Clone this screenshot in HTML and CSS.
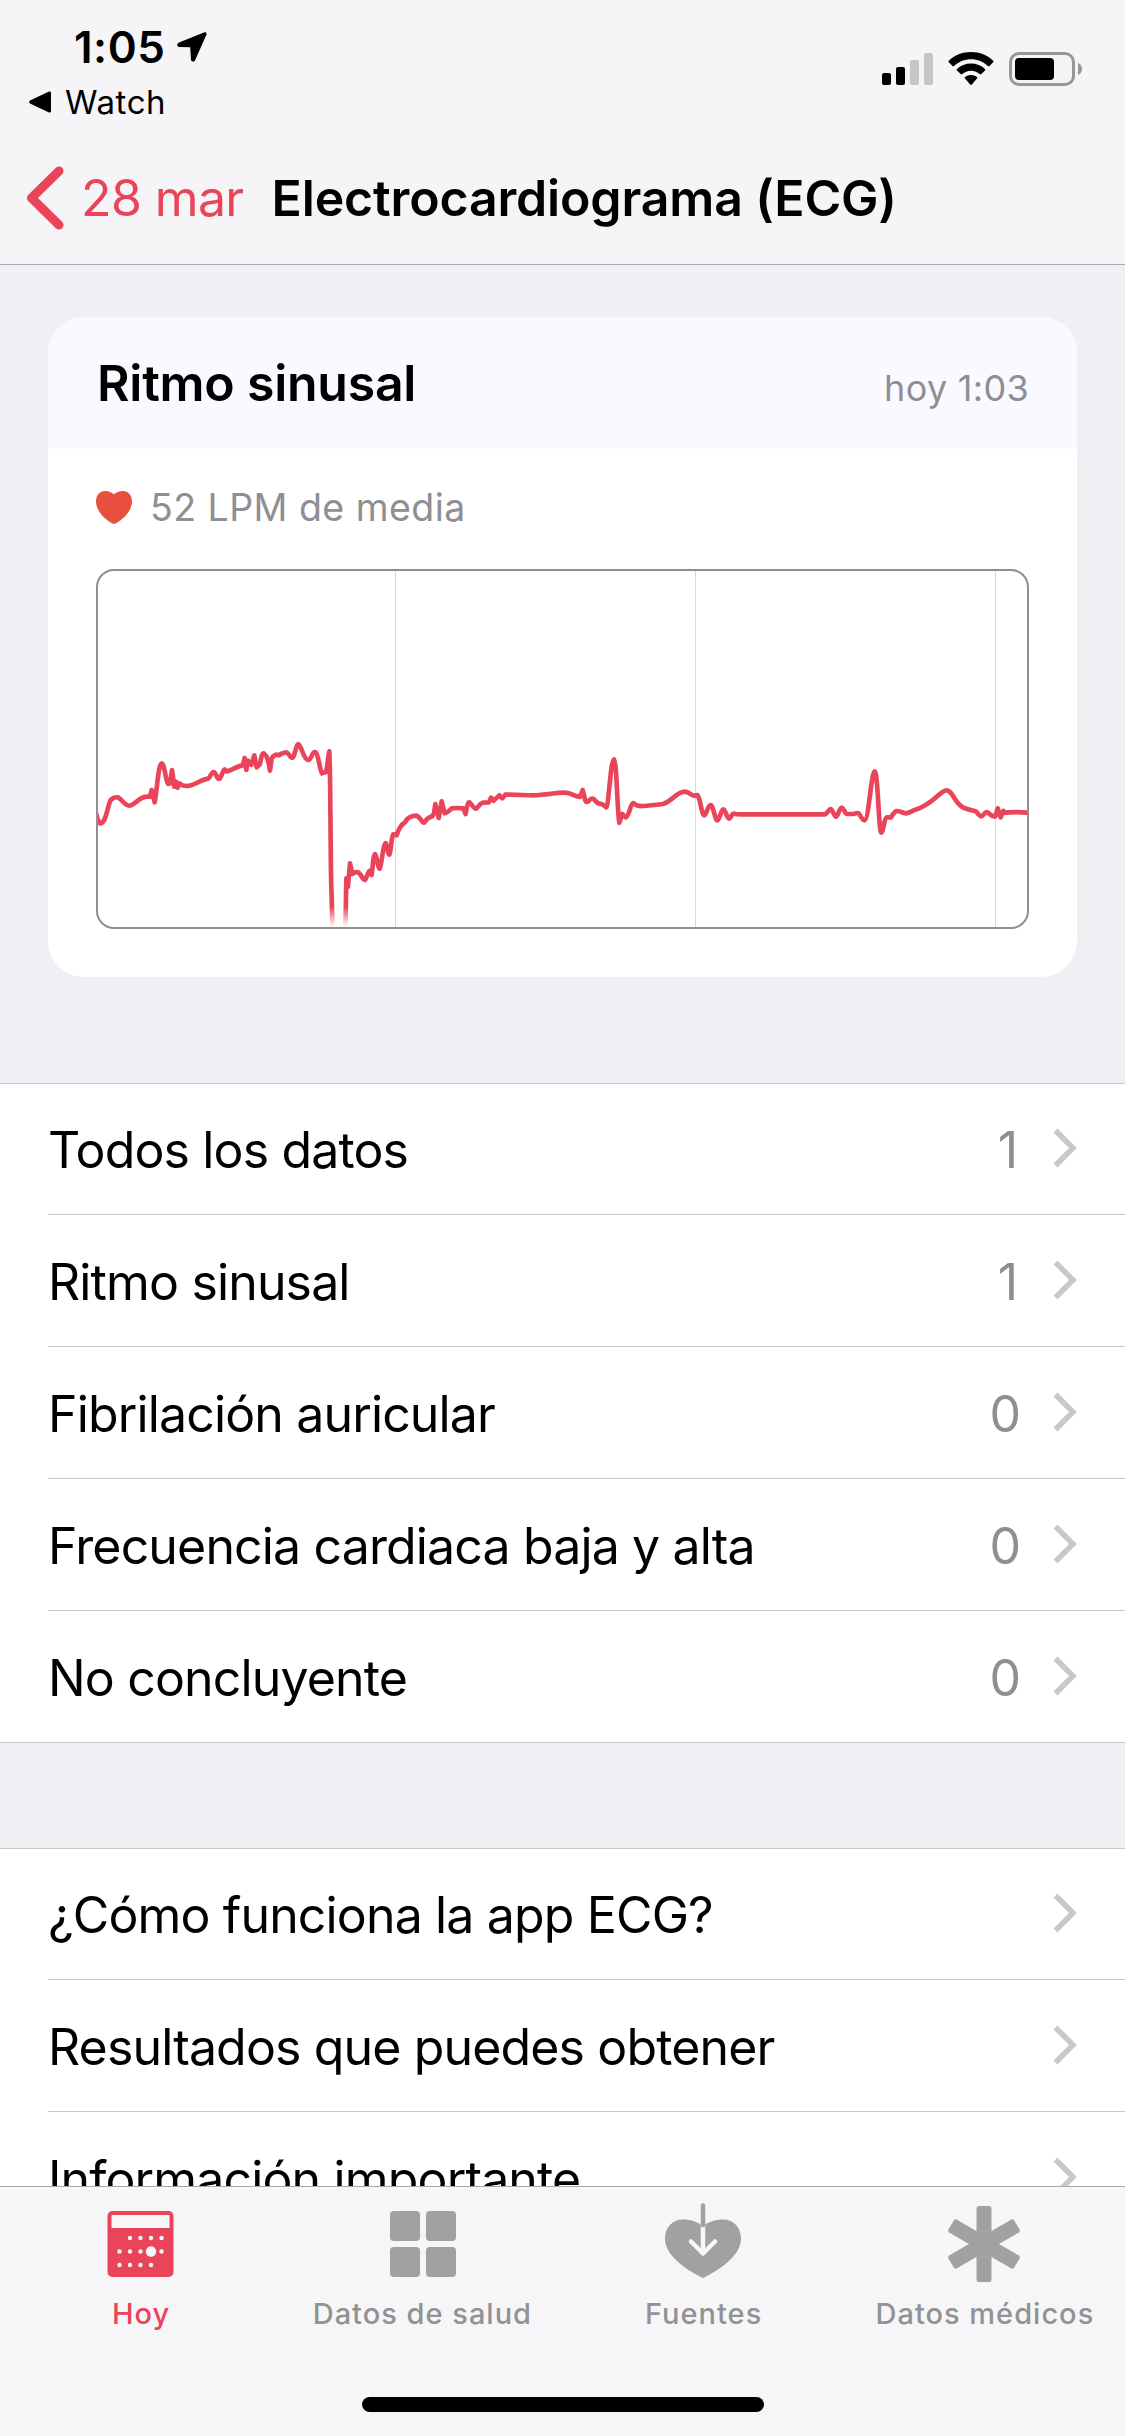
FILE: index.html
```html
<!DOCTYPE html>
<html lang="es">
<head>
    <meta charset="UTF-8">
    <meta name="viewport" content="width=device-width, initial-scale=1.0">
    <title>Electrocardiograma (ECG)</title>
    <link rel="stylesheet" href="styles.css">
</head>
<body>
<div class="screen">
    <header class="header">
        <div class="status-bar">
            <div class="status-left">
                <div class="clock">
                    <span class="clock-time">1:05</span>
                    <svg class="location" width="30" height="30" viewBox="0 0 30 30"><path d="M27.5.3 2 10.6C-.6 11.7-.2 14.8 2.300 14.900L13.200 15.200 14 27.500C14.200 30 17.200 30.400 18.200 28L29.300 3C30.200 1 29-.3 27.500.3Z"/></svg>
                </div>
                <div class="return-app">
                    <svg width="22" height="22" viewBox="0 0 22 22"><path d="M1 9.500 20 .5Q22 0 22 2V20Q22 22 20 21.500L1 12.500Q-.7 11 1 9.500Z"/></svg>
                    <span>Watch</span>
                </div>
            </div>
            <div class="status-right">
                <svg class="signal" width="51" height="32" viewBox="0 0 51 32">
                    <rect x="0" y="20" width="9" height="12" rx="2"/>
                    <rect x="14" y="14" width="9" height="18" rx="2"/>
                    <rect class="off" x="28" y="7" width="9" height="25" rx="2"/>
                    <rect class="off" x="42" y="0" width="9" height="32" rx="2"/>
                </svg>
                <svg class="wifi" width="46" height="34" viewBox="0 0 46 34">
                    <path d="M23 0C14.300 0 6.500 3.300.8 8.700Q0 9.500.8 10.300L4.500 14Q5.300 14.700 6.100 14C10.500 9.800 16.500 7.300 23 7.300S35.500 9.800 39.900 14Q40.700 14.700 41.500 14L45.200 10.300Q46 9.500 45.200 8.700C39.500 3.300 31.700 0 23 0Z"/>
                    <path d="M23 11.500C17.600 11.500 12.700 13.500 9 16.900Q8.200 17.600 9 18.400L12.700 22.100Q13.500 22.900 14.300 22.100C16.600 20.100 19.700 18.800 23 18.800S29.400 20.100 31.700 22.100Q32.500 22.900 33.300 22.100L37 18.400Q37.800 17.600 37 16.900C33.300 13.500 28.400 11.500 23 11.500Z"/>
                    <path d="M23 23C20.700 23 18.600 23.800 17 25Q16.100 25.700 17 26.500L22.200 32.500Q23 33.400 23.800 32.500L29 26.500Q29.900 25.700 29 25C27.400 23.800 25.300 23 23 23Z"/>
                </svg>
                <svg class="battery" width="74" height="34" viewBox="0 0 74 34">
                    <rect class="shell" x="1.500" y="1.500" width="63" height="31" rx="8.500"/>
                    <rect x="6" y="6" width="39" height="22" rx="4"/>
                    <path class="nub" d="M69 11C71.500 12 73 14.300 73 17S71.500 22 69 23Z"/>
                </svg>
            </div>
        </div>
        <nav class="nav-bar">
            <svg class="back" width="38" height="64" viewBox="0 0 38 64"><path d="M33 5 5.500 32 33 59"/></svg>
            <span class="back-label">28 mar</span>
            <h1>Electrocardiograma (ECG)</h1>
        </nav>
    </header>

    <main class="content">
        <section class="card">
            <div class="card-header">
                <h2>Ritmo sinusal</h2>
                <span class="card-time">hoy 1:03</span>
            </div>
            <div class="card-body">
                <div class="bpm">
                    <svg width="36" height="33" viewBox="0 0 36 33"><path d="M18 3.200C20 1.500 23.500 0 26.800 0 32.500 0 36 4.500 36 10.500 36 19.500 27.500 28.300 20 32.300Q18 33.300 16 32.300C8.500 28.300 0 19.500 0 10.500 0 4.500 3.500 0 9.200 0 12.500 0 16 1.500 18 3.200Z"/></svg>
                    <span>52 LPM de media</span>
                </div>
                <!-- Trazado del ECG -->
                <div class="chart">
                    <svg width="929" height="356" viewBox="24 -387 2787 1068">
                        <defs>
                            <linearGradient id="fade" gradientUnits="userSpaceOnUse" x1="0" y1="620" x2="0" y2="681">
                                <stop offset="0" stop-color="#ea445a"/>
                                <stop offset="1" stop-color="#ea445a" stop-opacity="0"/>
                            </linearGradient>
                        </defs>
                        <path class="grid-line" d="M916.500-387V681M1816.500-387V681M2716.500-387V681"/>
                        <path class="trace" d="M18 340Q26 372 32 370C48 368 52 320 62 300Q72 290 84 292C98 300 104 317 118 317C132 316 148 292 168 290L180 290 185 270 194 307C200 280 205 190 215 190C224 190 228 250 234 252L240 250 246 210 253 260 258 245 263 263 268 250Q275 258 290 258C310 258 330 240 354 236C362 230 364 216 371 216C378 216 380 237 387 237C394 237 398 208 404 208L410 214C425 212 440 198 458 196L464 174 469 210 474 182 484 194 493 166 500 202 510 192C514 170 516 160 521 160C530 165 536 185 540 212L545 175Q552 165 560 164L568 166Q575 158 590 157C598 160 600 174 606 174C614 174 618 132 625 132C633 132 640 180 656 180C664 178 666 156 675 156C685 158 690 215 696 220L708 216C714 195 715 155 718 154C721 160 722 540 724 560L728 700M766 700L769 535 774 560 780 490 787 522Q796 515 805 517C815 525 818 540 825 540C830 535 834 515 838 513L845 525C848 505 850 462 855 462C860 465 864 506 869 506C874 500 880 430 887 429C892 432 893 464 898 464C903 455 904 410 910 403L920 406C926 385 932 375 946 366C954 350 968 347 980 347C990 350 995 368 1002 368C1006 365 1010 352 1026 350L1032 340 1036 312 1046 354 1055 304 1064 340Q1072 338 1085 325Q1100 323 1120 325L1127 342Q1132 306 1138 307C1146 312 1150 326 1158 326C1166 322 1168 310 1178 308L1197 307 1203 293 1211 302 1228 286 1237 295 1246 284C1280 283 1300 286 1330 286C1370 285 1400 277 1425 278C1450 280 1455 290 1470 291L1478 270 1486 302Q1490 310 1497 302Q1506 290 1514 300Q1522 313 1536 312L1549 322C1556 318 1562 178 1572 178C1580 180 1582 340 1588 368L1597 342 1607 352C1618 350 1620 312 1630 309Q1640 320 1660 318C1690 316 1700 315 1718 312C1745 305 1760 275 1785 275C1800 277 1805 287 1812 287L1822 285C1832 295 1834 345 1843 346C1850 344 1853 315 1862 315C1870 315 1875 361 1882 361C1889 361 1893 328 1900 328C1907 328 1910 356 1917 356C1923 355 1925 341 1932 341Q1940 344 1960 343H2205C2213 340 2216 327 2222 327C2228 327 2232 350 2238 350C2244 350 2248 323 2256 323C2263 325 2264 342 2272 342H2292Q2304 336 2308 342C2312 350 2318 361 2324 361C2336 360 2344 214 2354 214C2364 215 2366 398 2374 398C2382 390 2382 355 2390 352L2403 352Q2412 336 2420 333C2432 333 2440 341 2450 340C2464 336 2468 332 2476 329C2530 313 2550 271 2570 271C2588 271 2592 308 2620 323C2632 329 2648 330 2657 334C2664 340 2668 349 2674 349C2680 349 2684 336 2690 336C2698 338 2702 349 2712 349L2716 349 2723 325 2732 352 2740 333 2746 338Q2770 335 2815 338"/>
                    </svg>
                </div>
            </div>
        </section>

        <ul class="list">
            <li class="row"><span>Todos los datos</span><span class="count one">1</span><svg class="chevron" width="24" height="40" viewBox="0 0 24 40"><path d="M2.500 2.500 20 20 2.500 37.500"/></svg></li>
            <li class="row"><span>Ritmo sinusal</span><span class="count one">1</span><svg class="chevron" width="24" height="40" viewBox="0 0 24 40"><path d="M2.500 2.500 20 20 2.500 37.500"/></svg></li>
            <li class="row"><span>Fibrilación auricular</span><span class="count">0</span><svg class="chevron" width="24" height="40" viewBox="0 0 24 40"><path d="M2.500 2.500 20 20 2.500 37.500"/></svg></li>
            <li class="row"><span>Frecuencia cardiaca baja y alta</span><span class="count">0</span><svg class="chevron" width="24" height="40" viewBox="0 0 24 40"><path d="M2.500 2.500 20 20 2.500 37.500"/></svg></li>
            <li class="row"><span>No concluyente</span><span class="count">0</span><svg class="chevron" width="24" height="40" viewBox="0 0 24 40"><path d="M2.500 2.500 20 20 2.500 37.500"/></svg></li>
        </ul>

        <ul class="list">
            <li class="row"><span>¿Cómo funciona la app ECG?</span><svg class="chevron" width="24" height="40" viewBox="0 0 24 40"><path d="M2.500 2.500 20 20 2.500 37.500"/></svg></li>
            <li class="row"><span>Resultados que puedes obtener</span><svg class="chevron" width="24" height="40" viewBox="0 0 24 40"><path d="M2.500 2.500 20 20 2.500 37.500"/></svg></li>
            <li class="row"><span>Información importante</span><svg class="chevron" width="24" height="40" viewBox="0 0 24 40"><path d="M2.500 2.500 20 20 2.500 37.500"/></svg></li>
        </ul>
    </main>

    <footer class="tab-bar">
        <div class="tabs">
            <div class="tab active">
                <svg width="80" height="80" viewBox="0 0 80 80">
                    <rect x="6.500" y="8" width="66" height="66" rx="5"/>
                    <g class="cutout">
                        <rect x="10.500" y="12" width="58" height="13" rx="1"/>
                        <circle cx="29" cy="35" r="2.200"/><circle cx="39.500" cy="35" r="2.200"/><circle cx="50" cy="35" r="2.200"/><circle cx="60.500" cy="35" r="2.200"/>
                        <circle cx="18.500" cy="48.500" r="2.200"/><circle cx="29" cy="48.500" r="2.200"/><circle cx="39.500" cy="48.500" r="2.200"/><circle cx="50" cy="48.500" r="5.200"/><circle cx="60.500" cy="48.500" r="2.200"/>
                        <circle cx="18.500" cy="62" r="2.200"/><circle cx="29" cy="62" r="2.200"/><circle cx="39.500" cy="62" r="2.200"/><circle cx="50" cy="62" r="2.200"/>
                    </g>
                </svg>
                <span>Hoy</span>
            </div>
            <div class="tab">
                <svg width="80" height="80" viewBox="0 0 80 80">
                    <rect x="8" y="8" width="30" height="30" rx="4"/>
                    <rect x="44" y="8" width="30" height="30" rx="4"/>
                    <rect x="8" y="44" width="30" height="30" rx="4"/>
                    <rect x="44" y="44" width="30" height="30" rx="4"/>
                </svg>
                <span>Datos de salud</span>
            </div>
            <div class="tab">
                <svg width="80" height="80" viewBox="0 0 80 80">
                    <path d="M40 23C34 18.500 27 16.500 20 16.500 9 16.500 2 24.500 2 36 2 51 21 66 40 75 59 66 78 51 78 36 78 24.500 71 16.500 60 16.500 53 16.500 46 18.500 40 23Z"/>
                    <path class="arrow" d="M40 21V50M28 38.500 40 50.500 52 38.500"/>
                    <path class="stem" d="M40 2.500V22"/>
                </svg>
                <span>Fuentes</span>
            </div>
            <div class="tab">
                <svg width="80" height="80" viewBox="0 0 80 80">
                    <rect x="32.500" y="3" width="15" height="76" rx="2.500"/>
                    <rect x="32.500" y="3" width="15" height="76" rx="2.500" transform="rotate(60 40 41)"/>
                    <rect x="32.500" y="3" width="15" height="76" rx="2.500" transform="rotate(-60 40 41)"/>
                </svg>
                <span>Datos médicos</span>
            </div>
        </div>
        <div class="home-indicator"></div>
    </footer>
</div>
</body>
</html>
```
FILE: styles.css
```css
* {
    box-sizing: border-box;
}

body {
    margin: 0;
    font-family: Inter, "Liberation Sans", sans-serif;
    background-color: #efeff4;
    color: #000;
}

h1, h2, ul {
    margin: 0;
    padding: 0;
}

svg {
    display: block;
    flex-shrink: 0;
}

.screen {
    width: 1125px;
    height: 2436px;
    display: flex;
    flex-direction: column;
    overflow: hidden;
}

/* Cabecera */
.header {
    flex-shrink: 0;
    height: 265px;
    background-color: #f5f5f7;
    border-bottom: 1px solid #a8a8ad;
}

.status-bar {
    height: 132px;
    display: flex;
    justify-content: space-between;
}

.status-left {
    padding: 22px 0 0 29px;
}

.clock {
    display: flex;
    align-items: center;
    height: 50px;
    padding-left: 45px;
    gap: 12px;
}

.clock-time {
    font-size: 44px;
    font-weight: 600;
    line-height: 50px;
    letter-spacing: 0.5px;
}

.return-app {
    display: flex;
    align-items: center;
    gap: 14px;
    height: 40px;
    margin-top: 10px;
    font-size: 33px;
    line-height: 40px;
    letter-spacing: 0.6px;
}

.status-right {
    display: flex;
    align-items: flex-start;
    padding: 52px 42px 0 0;
}

.signal {
    margin-top: 1px;
}

.signal .off {
    fill: #c5c5c7;
}

.wifi {
    margin-left: 15px;
}

.battery {
    margin-left: 15px;
}

.battery .shell {
    fill: none;
    stroke: #979799;
    stroke-width: 3;
}

.battery .nub {
    fill: #979799;
}

.nav-bar {
    height: 132px;
    display: flex;
    align-items: center;
    padding-left: 26px;
}

.back {
    fill: none;
    stroke: #ea445a;
    stroke-width: 9;
    stroke-linecap: round;
    stroke-linejoin: round;
}

.back-label {
    margin-left: 17px;
    font-size: 50px;
    letter-spacing: -0.6px;
    color: #ea445a;
}

.nav-bar h1 {
    margin-left: 28px;
    font-size: 50px;
    font-weight: 600;
    letter-spacing: -0.15px;
    white-space: nowrap;
}

/* Contenido */
.content {
    flex: 1;
    min-height: 0;
    overflow: hidden;
    padding-top: 52px;
}

.card {
    height: 660px;
    margin: 0 48px 106px;
    background-color: #fff;
    border-radius: 36px;
    overflow: hidden;
}

.card-header {
    display: flex;
    justify-content: space-between;
    align-items: baseline;
    height: 132px;
    padding: 36px 48px 0 49px;
    background-color: #faf9ff;
}

.card-header h2 {
    font-size: 50px;
    font-weight: 600;
    line-height: 60px;
    letter-spacing: -0.25px;
}

.card-time {
    font-size: 36px;
    letter-spacing: 0.3px;
    color: #8e8e93;
}

.card-body {
    padding: 35px 48px 0;
}

.bpm {
    display: flex;
    align-items: center;
    gap: 18px;
    height: 46px;
    margin-bottom: 39px;
    font-size: 37.5px;
    letter-spacing: 0.45px;
    color: #8e8e93;
}

.bpm svg {
    fill: #e94f3d;
}

.chart {
    height: 360px;
    border: 2px solid #8e8e93;
    border-radius: 18px;
    overflow: hidden;
}

.grid-line {
    fill: none;
    stroke: #d8d8da;
    stroke-width: 3;
}

.trace {
    fill: none;
    stroke: url(#fade);
    stroke-width: 14;
    stroke-linecap: round;
    stroke-linejoin: round;
}

/* Listas */
.list {
    margin-bottom: 105px;
    padding-left: 48px;
    background-color: #fff;
    border-top: 1px solid #c8c7cc;
    border-bottom: 1px solid #c8c7cc;
    list-style: none;
}

.row {
    display: flex;
    align-items: center;
    height: 132px;
    padding: 2px 48px 0 0;
    border-bottom: 1px solid #c8c7cc;
    font-size: 50px;
    letter-spacing: -0.85px;
}

.row:first-child {
    height: 131px;
}

.row:last-child {
    height: 131px;
    border-bottom: none;
}

.count {
    margin-left: auto;
    letter-spacing: 0;
    color: #8e8e93;
}

.count.one {
    padding-right: 3px;
}

.chevron {
    margin: 0 0 4px auto;
    fill: none;
    stroke: #c7c7cc;
    stroke-width: 5.5;
}

.count + .chevron {
    margin-left: 32px;
}

/* Barra inferior */
.tab-bar {
    flex-shrink: 0;
    height: 250px;
    background-color: #f6f6f8;
    border-top: 1px solid #a8a8ab;
}

.tabs {
    display: grid;
    grid-template-columns: repeat(4, 1fr);
    height: 210px;
    padding-top: 16px;
}

.tab {
    display: flex;
    flex-direction: column;
    align-items: center;
    font-size: 29px;
    font-weight: 500;
    letter-spacing: 1px;
    color: #929292;
    white-space: nowrap;
}

.tab svg {
    fill: #a1a1a1;
}

.tab span {
    margin-top: 13px;
    padding-left: 1px;
    line-height: 36px;
}

.tab.active {
    color: #ea445a;
}

.tab.active svg {
    fill: #ea445a;
}

.tab .cutout {
    fill: #f7f7f7;
}

.tab .arrow,
.tab .stem {
    fill: none;
    stroke: #f7f7f7;
    stroke-width: 4.5;
    stroke-linecap: round;
    stroke-linejoin: round;
}

.tab .stem {
    stroke: #a1a1a1;
}

.home-indicator {
    width: 402px;
    height: 15px;
    margin: 0 auto;
    border-radius: 8px;
    background-color: #000;
}
```
